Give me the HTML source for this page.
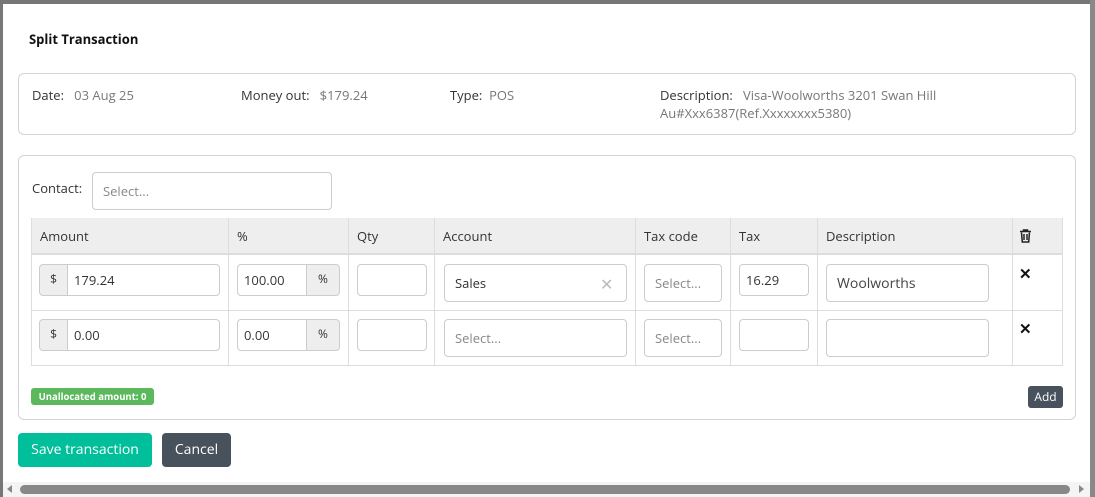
<!DOCTYPE html>
<html><head><style>
*{box-sizing:border-box;margin:0;padding:0}
body{width:1095px;height:497px;background:#777;font-family:"Open Sans","Liberation Sans",sans-serif;font-size:13px;color:#333;position:relative;overflow:hidden}
.a{position:absolute}
#modal{left:3px;top:4px;width:1087px;height:493px;background:#fff}
.box{border:1px solid #d4d4d4;border-radius:6px;background:#fff}
.lbl{color:#333}.val{color:#777}
.inp{position:absolute;border:1px solid #ccc;border-radius:4px;background:#fff;font-size:13px;color:#333;padding-left:10px;display:flex;align-items:center}
.ph{color:#888}
.addon{position:absolute;background:#eee;border:1px solid #ccc;font-size:12px;display:flex;justify-content:center;padding-top:5px}
.th{position:absolute;top:218px;height:37px;background:#eee;border-bottom:2px solid #ddd}
.vl{position:absolute;width:1px;background:#ddd;top:218px;height:148px}
.hl{position:absolute;height:1px;background:#ddd;left:31px;width:1032px}
.ht{position:absolute;top:227px;font-size:13px}
.x{position:absolute;font-weight:bold;font-size:15px;color:#111}
</style></head><body>
<div class="a" id="modal"></div>
<div class="a" style="left:1090px;top:0;width:5px;height:497px;background:#888"></div>
<div class="a" style="left:29px;top:30px;font-weight:bold;font-size:13px;color:#111">Split Transaction</div>

<div class="a box" style="left:18px;top:73px;width:1058px;height:62px"></div>
<div class="a" style="left:32px;top:86px"><span class="lbl">Date:</span>&nbsp;&nbsp; <span class="val">03 Aug 25</span></div>
<div class="a" style="left:241px;top:86px"><span class="lbl">Money out:</span>&nbsp;&nbsp; <span class="val">$179.24</span></div>
<div class="a" style="left:450px;top:86px"><span class="lbl">Type:</span>&nbsp; <span class="val">POS</span></div>
<div class="a" style="left:660px;top:86px;width:330px;line-height:18px"><span class="lbl">Description:</span>&nbsp;&nbsp; <span class="val">Visa-Woolworths 3201 Swan Hill Au#Xxx6387(Ref.Xxxxxxxx5380)</span></div>

<div class="a box" style="left:18px;top:155px;width:1058px;height:265px"></div>
<div class="a" style="left:32px;top:179px">Contact:</div>
<div class="inp" style="left:92px;top:172px;width:240px;height:38px"><span class="ph">Select...</span></div>

<div class="th" style="left:31px;width:1032px"></div>
<div class="vl" style="left:31px"></div><div class="vl" style="left:228px"></div><div class="vl" style="left:348px"></div><div class="vl" style="left:434px"></div><div class="vl" style="left:635px"></div><div class="vl" style="left:730px"></div><div class="vl" style="left:817px"></div><div class="vl" style="left:1012px"></div><div class="vl" style="left:1062px"></div>
<div class="hl" style="top:310px"></div><div class="hl" style="top:365px"></div>
<div class="ht" style="left:40px">Amount</div><div class="ht" style="left:237px">%</div><div class="ht" style="left:357px">Qty</div><div class="ht" style="left:443px">Account</div><div class="ht" style="left:644px">Tax code</div><div class="ht" style="left:739px">Tax</div><div class="ht" style="left:826px">Description</div>
<svg class="a" style="left:1019px;top:229px" width="13" height="14" viewBox="0 0 13 14"><path d="M1 2.5h11M4.5 2.5V1h4v1.5M2.5 3.5l.8 9.5h6.4l.8-9.5M5 5v6M8 5v6" stroke="#222" stroke-width="1.5" fill="none"/></svg>

<!-- row1 -->
<div class="addon" style="left:39px;top:264px;width:29px;height:32px;border-radius:4px 0 0 4px">$</div>
<div class="inp" style="left:67px;top:264px;width:153px;height:32px;border-radius:0 4px 4px 0;padding-left:6px">179.24</div>
<div class="inp" style="left:237px;top:264px;width:70px;height:32px;border-radius:4px 0 0 4px;padding-left:6px">100.00</div>
<div class="addon" style="left:306px;top:264px;width:34px;height:32px;border-radius:0 4px 4px 0">%</div>
<div class="inp" style="left:357px;top:264px;width:70px;height:32px"></div>
<div class="inp" style="left:444px;top:264px;width:183px;height:38px">Sales</div>
<div class="a" style="left:600px;top:273px;color:#bbb;font-size:16px">✕</div>
<div class="inp" style="left:644px;top:264px;width:78px;height:38px"><span class="ph">Select...</span></div>
<div class="inp" style="left:739px;top:264px;width:70px;height:32px;padding-left:6px">16.29</div>
<div class="inp" style="left:826px;top:264px;width:163px;height:38px;font-size:14px;color:#444">Woolworths</div>
<div class="x" style="left:1019px;top:264px">✕</div>
<!-- row2 -->
<div class="addon" style="left:39px;top:319px;width:29px;height:32px;border-radius:4px 0 0 4px">$</div>
<div class="inp" style="left:67px;top:319px;width:153px;height:32px;border-radius:0 4px 4px 0;padding-left:6px">0.00</div>
<div class="inp" style="left:237px;top:319px;width:70px;height:32px;border-radius:4px 0 0 4px;padding-left:6px">0.00</div>
<div class="addon" style="left:306px;top:319px;width:34px;height:32px;border-radius:0 4px 4px 0">%</div>
<div class="inp" style="left:357px;top:319px;width:70px;height:32px"></div>
<div class="inp" style="left:444px;top:319px;width:183px;height:38px"><span class="ph">Select...</span></div>
<div class="inp" style="left:644px;top:319px;width:78px;height:38px"><span class="ph">Select...</span></div>
<div class="inp" style="left:739px;top:319px;width:70px;height:32px"></div>
<div class="inp" style="left:826px;top:319px;width:163px;height:38px"></div>
<div class="x" style="left:1019px;top:319px">✕</div>

<div class="a" style="left:31px;top:388px;width:123px;height:17px;background:#5cb85c;border-radius:3px;color:#fff;font-size:9.5px;font-weight:bold;text-align:center;line-height:17px">Unallocated amount: 0</div>
<div class="a" style="left:1028px;top:386px;width:35px;height:22px;background:#47525d;border-radius:3px;color:#fff;font-size:12px;text-align:center;line-height:22px">Add</div>

<div class="a" style="left:18px;top:433px;width:134px;height:34px;background:#00bf9a;border-radius:4px;color:#fff;font-size:14px;text-align:center;line-height:34px">Save transaction</div>
<div class="a" style="left:162px;top:433px;width:69px;height:34px;background:#48525c;border-radius:4px;color:#fff;font-size:14px;text-align:center;line-height:34px">Cancel</div>

<div class="a" style="left:3px;top:482px;width:1087px;height:15px;background:#f4f4f4"></div>
<div class="a" style="left:20px;top:485px;width:1050px;height:9px;background:#888;border-radius:5px"></div>
<div class="a" style="left:7px;top:485px;width:0;height:0;border-top:4.5px solid transparent;border-bottom:4.5px solid transparent;border-right:5px solid #888"></div>
<div class="a" style="left:1079px;top:485px;width:0;height:0;border-top:4.5px solid transparent;border-bottom:4.5px solid transparent;border-left:5px solid #888"></div>
</body></html>
